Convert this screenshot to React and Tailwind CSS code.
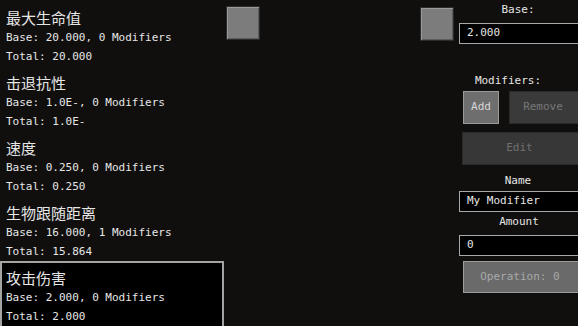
const attributes = [
  { name: "最大生命值", base: "20.000", mods: 0, total: "20.000" },
  { name: "击退抗性", base: "1.0E-", mods: 0, total: "1.0E-" },
  { name: "速度", base: "0.250", mods: 0, total: "0.250" },
  { name: "生物跟随距离", base: "16.000", mods: 1, total: "15.864" },
  { name: "攻击伤害", base: "2.000", mods: 0, total: "2.000", selected: true },
];

const mono = "font-['DejaVu_Sans_Mono','Liberation_Mono',monospace]";

export default function App() {
  return (
    <div className={`flex h-[326px] w-[578px] overflow-hidden bg-[#100f0e] text-[11px] text-[#e6e6e6] ${mono}`}>

      {/* ATTRIBUTE LIST */}

      <div className="w-[224px] shrink-0 pt-[8px]">
        {attributes.map((a, i) => (
          <Entry key={i} attr={a} />
        ))}
      </div>

      {/* LEFT SQUARE */}

      <div className="ml-[2px] pt-[6px]">
        <Square />
      </div>

      <div className="flex-1" />

      {/* RIGHT SQUARE */}

      <div className="pt-[7px] mr-[5px]">
        <Square />
      </div>

      {/* EDITOR PANEL */}

      <div className="-mr-[5px] w-[124px] shrink-0">

        <Label className="h-[23px] pt-[3px] pr-[6px]">Base:</Label>

        <Field value="2.000" />

        <Label className="h-[47px] pt-[30px] pr-[26px]">Modifiers:</Label>

        <div className="flex gap-[10px] pl-[4px]">
          <button className="h-[33px] w-[36px] border border-[#9a9a9a] bg-[#6e6e6e] text-[#d6d6d6]">
            Add
          </button>
          <button className="h-[33px] flex-1 border border-[#2a2a2a] bg-[#3a3a3a] pr-[6px] text-[#777]">
            Remove
          </button>
        </div>

        <div className="pt-[8px] pl-[3px]">
          <button className="h-[33px] w-full border border-[#2a2a2a] bg-[#373737] pr-[6px] text-[#707070]">
            Edit
          </button>
        </div>

        <Label className="h-[26px] pt-[9px] pr-[6px]">Name</Label>

        <Field value="My Modifier" />

        <Label className="h-[23px] pt-[3px] pr-[4px]">Amount</Label>

        <Field value="0" />

        <div className="pt-[5px] pl-[4px]">
          <button className="h-[32px] w-full border border-[#9c9c9c] bg-[#6a6a6a] pr-[6px] text-[#a9a9a9]">
            Operation: 0
          </button>
        </div>

      </div>

    </div>
  );
}


/* LIST ENTRY */

function Entry({ attr }) {

  const body = (
    <>
      <p className="h-[20px] text-[15px] leading-[20px] font-['Noto_Sans_CJK_SC',sans-serif]">
        {attr.name}
      </p>
      <p className="h-[19px] leading-[19px]">
        Base: {attr.base}, {attr.mods} Modifiers
      </p>
      <p className="h-[19px] leading-[19px]">
        Total: {attr.total}
      </p>
    </>
  );

  if (attr.selected) {
    return (
      <div className="-mt-[7px] h-[80px] border-2 border-[#a3a3a3] bg-black pt-[5px] pl-[4px]">
        {body}
      </div>
    );
  }

  return (
    <div className="mb-[7px] pl-[6px]">
      {body}
    </div>
  );

}


/* GRAY SQUARE BUTTON */

function Square() {
  return (
    <div className="h-[34px] w-[34px] border border-[#2b2b2b] bg-[#7c7c7c] shadow-[inset_1px_1px_0_#9a9a9a,inset_-1px_-1px_0_#5c5c5c]" />
  );
}


/* CENTERED LABEL */

function Label({ className, children }) {
  return (
    <p className={`text-center leading-[14px] text-[#e6e6e6] ${className}`}>
      {children}
    </p>
  );
}


/* TEXT FIELD */

function Field({ value }) {
  return (
    <div className="flex h-[21px] items-center border border-[#a8a8a8] bg-black pl-[7px] text-[#e6e6e6]">
      {value}
    </div>
  );
}
